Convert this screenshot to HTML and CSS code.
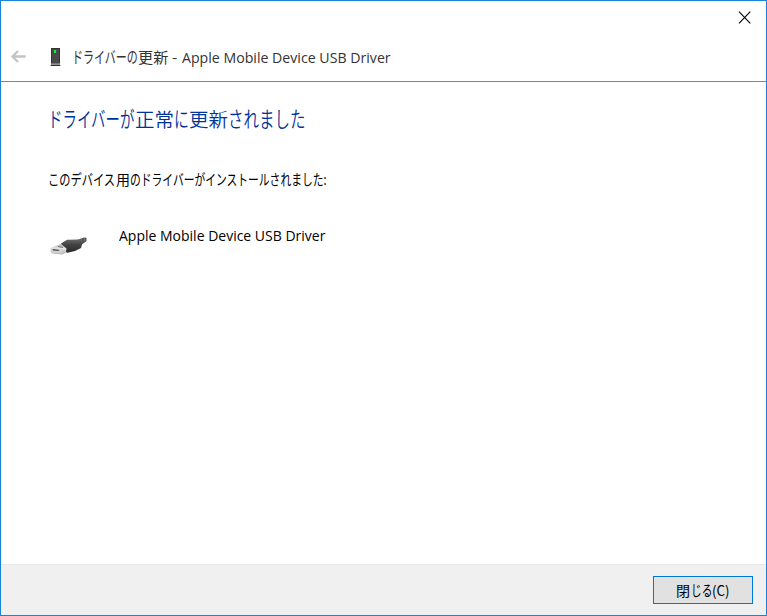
FILE: index.html
```html
<!DOCTYPE html>
<html lang="ja">
<head>
<meta charset="utf-8">
<title>ドライバーの更新</title>
<link rel="stylesheet" href="styles.css">
</head>
<body>
<main class="window">
  <header class="header">
    <div class="caption">
      <svg class="close" width="13" height="13" viewBox="0 0 13 13"><path d="M1 .7l11.3 11.6M12.3.7L1 12.3" stroke="#000" stroke-width="1.1" fill="none"/></svg>
    </div>
    <div class="titlebar">
      <svg class="back" width="16" height="14" viewBox="0 0 16 14"><path d="M15.7 6.5H2.5M8 1L2.5 6.5 8 12" stroke="#c4c4c4" stroke-width="2.3" fill="none"/></svg>
      <svg class="device" width="12" height="20" viewBox="0 0 12 20"><path d="M2 1h9v16H2z" fill="#343434"/><path d="M3 2h7v14H3z" fill="#494949"/><path d="M5 3h2v3H5z" fill="#12f02f"/><path d="M2 16.5h9v.7H2z" fill="#bbb"/><path d="M2 17.5h9l.5 1.5h-10z" fill="#303030"/></svg>
      <h1 class="title"><span class="run kana t1"><span>ドライバーの</span></span><span class="run t2"><span>更新</span></span><span class="run t3"><span>-</span></span><span class="run t4"><span>Apple Mobile Device USB Driver</span></span></h1>
    </div>
  </header>
  <section class="content">
    <h2 class="heading"><span class="run kana h1"><span>ドライバーが</span></span><span class="run h2"><span>正常</span></span><span class="run kana h3"><span>に</span></span><span class="run h4"><span>更新</span></span><span class="run kana h5"><span>されました</span></span></h2>
    <p class="message"><span class="run kana m1"><span>このデバイス</span></span><span class="run m2"><span>用</span></span><span class="run kana m3"><span>のドライバーがインストールされました:</span></span></p>
    <div class="driver">
      <svg class="usb" width="40" height="22" viewBox="0 0 40 22">
        <defs><linearGradient id="body" x1="0" y1="0" x2="0" y2="1"><stop offset="0" stop-color="#666"/><stop offset=".4" stop-color="#424242"/><stop offset="1" stop-color="#292929"/></linearGradient>
        <linearGradient id="metal" x1="0" y1="0" x2="0" y2="1"><stop offset="0" stop-color="#a9a9a9"/><stop offset=".45" stop-color="#e6e6e6"/><stop offset="1" stop-color="#aaa"/></linearGradient></defs>
        <path d="M27 4l7-2.500 2.500.3v3.500L31 9z" fill="#555"/>
        <path d="M31 2.500l1 3.500M34 1.700l1 3.500" stroke="#888" stroke-width=".7"/>
        <path d="M.5 12L12 7.500l7 4 .5 3.500-7.500 3.500-10-1-1.500-2.500z" fill="url(#metal)"/>
        <path d="M.5 12.500l11 .5 1 4.500-10.500-.5z" fill="#d0d0d0"/>
        <path d="M2.500 13l6 .7.500 1.300-6-.6z" fill="#4b4b4b"/>
        <path d="M8 10.500l5 .8" stroke="#777" stroke-width="1.200"/>
        <path d="M11 7.500l6-3.700 11-.4 5 1.600-2 7-6 3-7.500 1.800-1.500-.8.500-3.500-3-2.500z" fill="url(#body)"/>
      </svg>
      <span class="name"><span class="run n1"><span>Apple Mobile Device USB Driver</span></span></span>
    </div>
  </section>
  <footer class="footer"><button class="button"><span class="run b1"><span>閉</span></span><span class="run kana b2"><span>じる</span></span><span class="run b3"><span>(C)</span></span></button></footer>
</main>
</body>
</html>
```
FILE: styles.css
```css
* { box-sizing: border-box; }
body { margin: 0; font-family: "Open Sans", "Noto Sans CJK JP", sans-serif; color: #000; }
.window { width: 767px; height: 616px; border: 1px solid #1883d7; background: #fff; display: flex; flex-direction: column; }
h1, h2, p { margin: 0; font-weight: 400; }
.header { height: 81px; flex: none; border-bottom: 1px solid #848484; }
.caption { height: 32px; display: flex; justify-content: flex-end; padding: 10px 15px 0 0; }
.titlebar { height: 48px; display: flex; align-items: flex-start; padding-left: 9px; }
.back { margin: 17px 0 0; }
.device { margin: 14px 0 0 23px; }
.title, .heading, .message, .name, .button { display: flex; align-items: baseline; white-space: nowrap; }
.run { display: block; flex: none; }
.kana { font-size: 1.08em; }
.run > span { display: inline-block; transform-origin: 0 50%; }
.title { height: 20px; margin: 13px 0 0 11px; font-size: 15px; line-height: 20px; color: #333; font-family: "Noto Sans CJK JP", sans-serif; }
.t1 { width: 66px; } .t1 > span { transform: scaleX(.68); }
.t2 { width: 34px; } .t2 > span { transform: scaleX(1.01); }
.t3 { width: 10px; }
.t4 > span, .n1 > span { font-family: "Open Sans", sans-serif; }
.t4 > span { transform: scaleX(.943); }
.content { flex: 1; padding: 22px 0 0 47px; }
.heading { height: 28px; font-size: 19.5px; line-height: 28px; color: #003399; font-family: "Noto Sans CJK JP", sans-serif; font-weight: 350; }
.h1 { width: 87px; } .h1 > span { transform: scaleX(.686); }
.h2 { width: 39px; }
.h3 { width: 15px; } .h3 > span { transform: scaleX(.707); }
.h4 { width: 39px; }
.h5 > span { transform: scaleX(.735); }
.message { height: 20px; margin-top: 36px; font-size: 14px; line-height: 20px; font-family: "Noto Sans CJK JP", sans-serif; }
.m1 { width: 68px; } .m1 > span { transform: scaleX(.744); }
.m2 { width: 14px; }
.m3 > span { transform: scaleX(.713); }
.driver { margin-top: 37px; display: flex; align-items: flex-start; }
.usb { margin: 11px 0 0 2px; }
.name { margin-left: 29px; font-size: 15px; line-height: 20px; }
.n1 > span { transform: scaleX(.933); }
.footer { height: 51px; flex: none; background: #f0f0f0; border-top: 1px solid #e8e8e8; display: flex; justify-content: flex-end; padding: 11px 13px 0 0; }
.button { width: 100px; height: 28px; padding: 0 0 0 22px; border: 1px solid #0078d7; outline: 0; background: #e1e1e1; font: 14px/24px "Noto Sans CJK JP", sans-serif; color: #000; text-align: left; }
.b1 { width: 15px; }
.b2 { width: 21px; } .b2 > span { transform: scaleX(.707); }
.b3 > span { transform: scaleX(.95); }
```
